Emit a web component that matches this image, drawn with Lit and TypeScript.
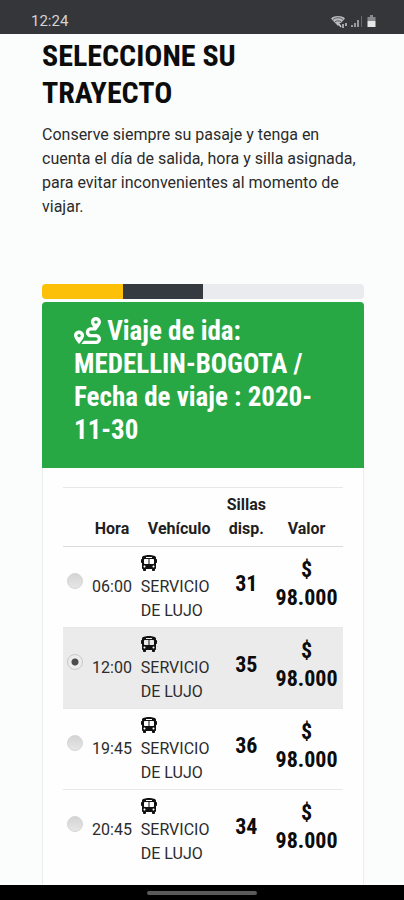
import { LitElement, html, css, svg } from "lit";
import { customElement, property, state } from "lit/decorators.js";
import { classMap } from "lit/directives/class-map.js";

interface Trip {
  hour: string;
  vehicle: string;
  seats: number;
  price: string;
}

const TRIPS: Trip[] = [
  { hour: "06:00", vehicle: "SERVICIO DE LUJO", seats: 31, price: "$ 98.000" },
  { hour: "12:00", vehicle: "SERVICIO DE LUJO", seats: 35, price: "$ 98.000" },
  { hour: "19:45", vehicle: "SERVICIO DE LUJO", seats: 36, price: "$ 98.000" },
  { hour: "20:45", vehicle: "SERVICIO DE LUJO", seats: 34, price: "$ 98.000" },
];

const busPath = svg`<path d="M488 128h-8V80c0-44.800-99.200-80-224-80S32 35.200 32 80v48h-8c-13.250 0-24 10.740-24 24v80c0 13.250 10.750 24 24 24h8v160c0 17.670 14.330 32 32 32v32c0 17.670 14.330 32 32 32h32c17.670 0 32-14.330 32-32v-32h192v32c0 17.670 14.330 32 32 32h32c17.670 0 32-14.330 32-32v-32h6.400c16 0 25.600-12.800 25.600-25.600V256h8c13.250 0 24-10.750 24-24v-80c0-13.260-10.750-24-24-24zM160 72c0-4.420 3.580-8 8-8h176c4.420 0 8 3.580 8 8v16c0 4.420-3.580 8-8 8H168c-4.420 0-8-3.580-8-8V72zm-48 328c-17.670 0-32-14.330-32-32s14.330-32 32-32 32 14.330 32 32-14.330 32-32 32zm128-112H128c-17.670 0-32-14.330-32-32v-96c0-17.670 14.330-32 32-32h112v160zm32 0V128h112c17.670 0 32 14.330 32 32v96c0 17.670-14.330 32-32 32H272zm128 112c-17.670 0-32-14.330-32-32s14.330-32 32-32 32 14.330 32 32-14.330 32-32 32z"/>`;

const routePath = svg`<path d="M416 320h-96c-17.600 0-32-14.400-32-32s14.400-32 32-32h96s96-107 96-160-43-96-96-96-96 43-96 96c0 25.500 22.200 63.400 45.300 96H320c-52.900 0-96 43.100-96 96s43.100 96 96 96h96c17.600 0 32 14.400 32 32s-14.400 32-32 32H185.500c-16 24.800-33.800 47.700-47.300 64H416c52.900 0 96-43.100 96-96s-43.100-96-96-96zm0-256c17.700 0 32 14.300 32 32s-14.300 32-32 32-32-14.300-32-32 14.300-32 32-32zM96 256c-53 0-96 43-96 96s96 160 96 160 96-107 96-160-43-96-96-96zm0 128c-17.700 0-32-14.300-32-32s14.300-32 32-32 32 14.300 32 32-14.300 32-32 32z"/>`;

@customElement("status-bar")
export class StatusBar extends LitElement {
  @property() time = "";

  static styles = css`
    :host {
      display: flex;
      align-items: flex-end;
      justify-content: space-between;
      height: 34px;
      box-sizing: border-box;
      padding: 0 28px 4px 31px;
      background: #35363a;
      color: #d4d4d6;
      font: 15px/18px Roboto, sans-serif;
    }
    .icons {
      display: flex;
      align-items: center;
      gap: 4px;
      height: 18px;
    }
    svg {
      display: block;
    }
  `;

  render() {
    return html`
      <span>${this.time}</span>
      <span class="icons">
        <svg width="16" height="13" viewBox="0 0 16 13" aria-hidden="true">
          <path d="M0 3.500C3.500.3 10.500.3 14 3.500L7 11z" fill="#b9babc" />
          <path d="M2 4.500c3-2.300 7-2.300 10 0M4 6.800c2-1.300 4-1.300 6 0" fill="none" stroke="#55565a" />
          <path d="M8.500 8h8v5h-8z" fill="#35363a" />
          <path d="M8 9l2 3M12 9v4M15 11V8" stroke="#c9cacc" stroke-width="1.500" fill="none" />
        </svg>
        <svg width="12" height="12" viewBox="0 0 12 12" aria-hidden="true">
          <path d="M1 12v-2M4 12V8M7 12V5" stroke="#98999c" stroke-width="2" />
          <path d="M10.500 12V1" stroke="#68696d" stroke-width="1" />
        </svg>
        <svg width="9" height="12" viewBox="0 0 9 12" aria-hidden="true">
          <path d="M3 0h3v2h2.500v4h-8V2H3z" fill="#88898c" />
          <path d="M.5 6h8v6h-8z" fill="#e6e6e7" />
        </svg>
      </span>
    `;
  }
}

@customElement("trip-table")
export class TripTable extends LitElement {
  @property({ attribute: false }) trips: Trip[] = [];
  @state() private selected = 1;

  static styles = css`
    :host {
      display: block;
    }
    table {
      width: 100%;
      table-layout: fixed;
      border-collapse: collapse;
      color: #2b2b2b;
      font: 16px/24px Roboto, sans-serif;
    }
    .c-pick { width: 9%; }
    .c-hour { width: 17%; }
    .c-vehicle { width: 31%; }
    .c-seats { width: 17%; }
    .c-price { width: 26%; }
    th,
    td {
      padding: 4px;
      border-top: 1px solid #e6e8ea;
      text-align: center;
      vertical-align: middle;
    }
    th {
      padding: 5px 0;
      color: #1f1f1f;
      font-weight: 700;
      vertical-align: bottom;
      border-bottom: 1px solid #d9dbdd;
    }
    .hour {
      padding: 4px 0;
    }
    .vehicle {
      padding: 4px 10px 4px 5px;
      text-align: left;
    }
    .bus {
      display: block;
      width: 16px;
      height: 16px;
      padding: 4px 0;
      fill: #111;
    }
    .selected {
      background: #ebebeb;
    }
    .strong {
      display: block;
      margin-bottom: 6px;
      color: #0c0c0c;
      font: 700 22px/28px "Roboto Condensed", "Liberation Sans Narrow", "Liberation Sans", sans-serif;
    }
    input {
      display: block;
      appearance: none;
      width: 16px;
      height: 16px;
      margin: 0 0 12px;
      border: 1px solid #d6d6d6;
      border-radius: 50%;
      background: linear-gradient(#d4d4d4, #e6e6e6);
    }
    input:checked {
      border-color: #c8c8c8;
      background: radial-gradient(circle, #4c4c4c 3px, #ececec 4px);
    }
  `;

  render() {
    return html`
      <table>
        <colgroup>
          <col class="c-pick" />
          <col class="c-hour" />
          <col class="c-vehicle" />
          <col class="c-seats" />
          <col class="c-price" />
        </colgroup>
        <thead>
          <tr>
            <th></th>
            <th scope="col">Hora</th>
            <th scope="col">Vehículo</th>
            <th scope="col">Sillas disp.</th>
            <th scope="col">Valor</th>
          </tr>
        </thead>
        <tbody>
          ${this.trips.map(
            (trip, i) => html`
              <tr class=${classMap({ selected: i === this.selected })}>
                <td>
                  <input
                    type="radio"
                    name="trip"
                    id="trip-${i}"
                    .checked=${i === this.selected}
                    @change=${() => (this.selected = i)}
                  />
                </td>
                <td class="hour"><label for="trip-${i}">${trip.hour}</label></td>
                <td class="vehicle">
                  <svg class="bus" viewBox="0 0 512 512" aria-hidden="true">${busPath}</svg>
                  ${trip.vehicle}
                </td>
                <td><span class="strong">${trip.seats}</span></td>
                <td><span class="strong">${trip.price}</span></td>
              </tr>
            `
          )}
        </tbody>
      </table>
    `;
  }
}

@customElement("app-root")
export class AppRoot extends LitElement {
  static styles = css`
    :host {
      display: flex;
      flex-direction: column;
      min-height: 100vh;
      background: #fbfdfc;
      font-family: Roboto, sans-serif;
    }
    main {
      flex: 1;
      display: flex;
      flex-direction: column;
      padding: 3px 40px 0 42px;
    }
    h1,
    h2 {
      margin: 0;
      font-family: "Roboto Condensed", "Liberation Sans Narrow", "Liberation Sans", sans-serif;
      font-weight: 700;
    }
    h1 {
      color: #0c0c0c;
      font-size: 30px;
      line-height: 37px;
    }
    p {
      margin: 12px 0 65px;
      color: #2b2b2b;
      font-size: 16px;
      line-height: 24px;
    }
    .progress {
      display: flex;
      height: 15px;
      margin-bottom: 3px;
      overflow: hidden;
      border-radius: 4px;
      background: #e9ebee;
    }
    .step {
      width: 25%;
    }
    .yellow {
      background: #fdc008;
    }
    .dark {
      background: #343a40;
    }
    .card {
      flex: 1;
      border: 1px solid #e9edee;
      border-top: 0;
      border-bottom: 0;
      border-radius: 4px 4px 0 0;
      background: #fefefe;
    }
    .head {
      margin: 0 -1px;
      padding: 13px 32px 21px;
      border-radius: 4px 4px 0 0;
      background: #28a745;
      color: #fff;
    }
    h2 {
      font-size: 27px;
      line-height: 33px;
    }
    .route {
      width: 27px;
      height: 27px;
      vertical-align: -4px;
      fill: currentColor;
    }
    .body {
      padding: 19px 20px 12px;
    }
    .navbar {
      display: flex;
      justify-content: center;
      align-items: center;
      height: 15px;
      background: #000;
    }
    .pill {
      width: 27%;
      height: 4px;
      border-radius: 2px;
      background: #5a5a5a;
    }
  `;

  render() {
    return html`
      <status-bar time="12:24"></status-bar>
      <main>
        <h1>SELECCIONE SU TRAYECTO</h1>
        <p>
          Conserve siempre su pasaje y tenga en cuenta el día de salida, hora y silla asignada, para
          evitar inconvenientes al momento de viajar.
        </p>
        <div class="progress">
          <div class="step yellow"></div>
          <div class="step dark"></div>
        </div>
        <section class="card">
          <header class="head">
            <h2>
              <svg class="route" viewBox="0 0 512 512" aria-hidden="true">${routePath}</svg>
              Viaje de ida: MEDELLIN-BOGOTA / Fecha de viaje : 2020-11-30
            </h2>
          </header>
          <div class="body">
            <trip-table .trips=${TRIPS}></trip-table>
          </div>
        </section>
      </main>
      <div class="navbar"><div class="pill"></div></div>
    `;
  }
}
